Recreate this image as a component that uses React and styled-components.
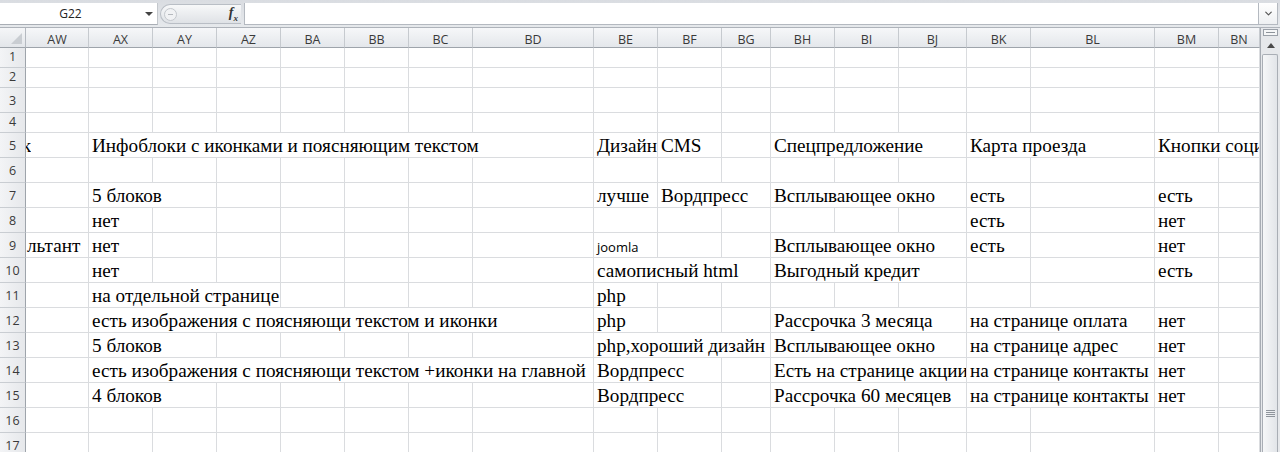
import React from "react";
import styled, { createGlobalStyle } from "styled-components";
import { ChevronDown } from "lucide-react";

const GlobalStyle = createGlobalStyle`
  html, body {
    margin: 0;
    padding: 0;
    overflow: hidden;
    background: #fff;
  }
  * { box-sizing: border-box; }
`;

const COLS = [
  ["AW", 63], ["AX", 64], ["AY", 64], ["AZ", 64], ["BA", 64], ["BB", 64],
  ["BC", 64], ["BD", 121], ["BE", 64], ["BF", 64], ["BG", 49], ["BH", 64],
  ["BI", 64], ["BJ", 68], ["BK", 64], ["BL", 124], ["BM", 64], ["BN", 41],
];
const TEMPLATE = `26px ${COLS.map((c) => c[1] + "px").join(" ")}`;

// c = column index (AW = 0), s = columns the text runs over,
// end = where text spilled from an off-screen column stops
const ROWS = [
  { n: 1, h: 20 },
  { n: 2, h: 20 },
  { n: 3, h: 25 },
  { n: 4, h: 20 },
  {
    n: 5, h: 25, cells: [
      { c: 0, t: "к", end: 5 },
      { c: 1, s: 7, t: "Инфоблоки с иконками и поясняющим текстом" },
      { c: 8, t: "Дизайн" },
      { c: 9, t: "CMS" },
      { c: 11, s: 3, t: "Спецпредложение" },
      { c: 14, s: 2, t: "Карта проезда" },
      { c: 16, s: 2, t: "Кнопки социальных сетей" },
    ],
  },
  { n: 6, h: 25 },
  {
    n: 7, h: 25, cells: [
      { c: 1, s: 2, t: "5 блоков" },
      { c: 8, t: "лучше" },
      { c: 9, s: 2, t: "Вордпресс" },
      { c: 11, s: 3, t: "Всплывающее окно" },
      { c: 14, t: "есть" },
      { c: 16, t: "есть" },
    ],
  },
  {
    n: 8, h: 25, cells: [
      { c: 1, t: "нет" },
      { c: 14, t: "есть" },
      { c: 16, t: "нет" },
    ],
  },
  {
    n: 9, h: 25, cells: [
      { c: 0, t: "льтант" },
      { c: 1, t: "нет" },
      { c: 8, t: "joomla", sans: true },
      { c: 11, s: 3, t: "Всплывающее окно" },
      { c: 14, t: "есть" },
      { c: 16, t: "нет" },
    ],
  },
  {
    n: 10, h: 25, cells: [
      { c: 1, t: "нет" },
      { c: 8, s: 3, t: "самописный html" },
      { c: 11, s: 3, t: "Выгодный кредит" },
      { c: 16, t: "есть" },
    ],
  },
  {
    n: 11, h: 25, cells: [
      { c: 1, s: 3, t: "на отдельной странице" },
      { c: 8, t: "php" },
    ],
  },
  {
    n: 12, h: 25, cells: [
      { c: 1, s: 7, t: "есть изображения с поясняющи текстом и иконки" },
      { c: 8, t: "php" },
      { c: 11, s: 3, t: "Рассрочка 3 месяца" },
      { c: 14, s: 2, t: "на странице оплата" },
      { c: 16, t: "нет" },
    ],
  },
  {
    n: 13, h: 25, cells: [
      { c: 1, s: 2, t: "5 блоков" },
      { c: 8, s: 3, t: "php,хороший дизайн" },
      { c: 11, s: 3, t: "Всплывающее окно" },
      { c: 14, s: 2, t: "на странице адрес" },
      { c: 16, t: "нет" },
    ],
  },
  {
    n: 14, h: 25, cells: [
      { c: 1, s: 7, t: "есть изображения с поясняющи текстом +иконки на главной" },
      { c: 8, s: 2, t: "Вордпресс" },
      { c: 11, s: 3, t: "Есть на странице акции" },
      { c: 14, s: 2, t: "на странице контакты" },
      { c: 16, t: "нет" },
    ],
  },
  {
    n: 15, h: 25, cells: [
      { c: 1, s: 2, t: "4 блоков" },
      { c: 8, s: 2, t: "Вордпресс" },
      { c: 11, s: 3, t: "Рассрочка 60 месяцев" },
      { c: 14, s: 2, t: "на странице контакты" },
      { c: 16, t: "нет" },
    ],
  },
  { n: 16, h: 25 },
  { n: 17, h: 25 },
];

const Window = styled.div`
  width: 1280px;
  height: 452px;
  display: flex;
  flex-direction: column;
  overflow: hidden;
  background: #e3e6ea;
`;

const FormulaBar = styled.div`
  flex: none;
  height: 27px;
  display: flex;
  align-items: flex-start;
  padding-top: 3px;
  background: linear-gradient(#d9dce1, #e6e9ec);
`;

const NameBox = styled.div`
  width: 158px;
  height: 22px;
  display: flex;
  align-items: center;
  background: #fff;
  border-bottom: 1px solid #a9aeb5;
  border-right: 1px solid #c3c7cc;
`;

const NameText = styled.span`
  flex: 1;
  text-align: center;
  padding-right: 4px;
  font: 12px "Open Sans", sans-serif;
  color: #222;
`;

const DropArrow = styled.span`
  width: 0;
  height: 0;
  margin-right: 4px;
  border-left: 4px solid transparent;
  border-right: 4px solid transparent;
  border-top: 4px solid #444;
`;

const FnArea = styled.div`
  width: 86px;
  height: 22px;
  display: flex;
  align-items: center;
  padding: 0 3px 0 2px;
`;

const Splitter = styled.div`
  flex: 1;
  height: 20px;
  display: flex;
  align-items: center;
  padding-left: 3px;
  border: 1px solid #b9bec5;
  border-right: none;
  border-radius: 10px 0 0 10px;
  background: linear-gradient(#f7f8f9, #dfe2e6);
`;

const Knob = styled.span`
  width: 13px;
  height: 13px;
  border-radius: 50%;
  border: 1px solid #c4c8cd;
  background: #f1f2f4;
  display: flex;
  align-items: center;
  justify-content: center;
  &::after {
    content: "";
    width: 5px;
    height: 1px;
    background: #b5b9be;
  }
`;

const Fx = styled.span`
  margin-left: auto;
  margin-right: 3px;
  font: italic bold 14px "Liberation Serif", serif;
  color: #333;
  sub {
    font-size: 9px;
  }
`;

const FormulaInput = styled.div`
  flex: 1;
  height: 22px;
  background: #fff;
  border: 1px solid #b4b9c0;
  border-top: none;
`;

const ExpandBtn = styled.div`
  width: 19px;
  height: 22px;
  margin-right: 2px;
  display: flex;
  align-items: center;
  justify-content: center;
  background: linear-gradient(#fff, #eef0f2);
  border: 1px solid #b4b9c0;
  border-left: none;
  border-top: none;
  color: #555;
`;

const Body = styled.div`
  flex: 1;
  min-height: 0;
  display: flex;
  border-top: 1px solid #aeb3ba;
`;

const Sheet = styled.div`
  width: 1260px;
  flex: none;
  overflow: hidden;
  background: #fff;
`;

const Row = styled.div`
  display: grid;
  grid-template-columns: ${TEMPLATE};
  height: ${(p) => p.$h}px;
`;

const Corner = styled.div`
  display: flex;
  align-items: flex-end;
  justify-content: flex-end;
  padding: 0 3px 3px 0;
  background: linear-gradient(#f5f6f8, #e3e6ea);
  border-right: 1px solid #b4b9c0;
  border-bottom: 1px solid #9ea4ab;
  &::after {
    content: "";
    width: 0;
    height: 0;
    border-left: 11px solid transparent;
    border-bottom: 11px solid #c9cdd2;
  }
`;

const ColHead = styled.div`
  display: flex;
  align-items: center;
  justify-content: center;
  padding-top: 4px;
  overflow: hidden;
  white-space: nowrap;
  background: linear-gradient(#f6f7f9, #e4e7eb);
  border-right: 1px solid #c6cacf;
  border-bottom: 1px solid #9ea4ab;
  font: 12.5px "Open Sans", sans-serif;
  color: #3a3a3a;
`;

const RowNum = styled.div`
  display: flex;
  align-items: flex-end;
  justify-content: center;
  padding-bottom: ${(p) => (p.$h > 20 ? 3 : 2)}px;
  background: linear-gradient(to right, #f3f4f6, #e6e8eb);
  border-right: 1px solid #9ea4ab;
  border-bottom: 1px solid #c9cdd2;
  font: 12.5px "Open Sans", sans-serif;
  color: #3a3a3a;
`;

const Cell = styled.div`
  grid-column: span ${(p) => p.$span};
  min-width: 0;
  display: flex;
  align-items: flex-end;
  padding: 0 2px 0 ${(p) => (p.$tight ? 1 : 3)}px;
  overflow: hidden;
  white-space: nowrap;
  border-right: 1px solid #dadcdf;
  border-bottom: 1px solid #dadcdf;
  font: ${(p) => (p.$sans ? '13px "Open Sans", sans-serif' : '19.2px "Liberation Serif", serif')};
  line-height: ${(p) => (p.$sans ? "20px" : "23px")};
  color: #000;
`;

const Spill = styled.span`
  flex: none;
  display: block;
  width: ${(p) => p.$end}px;
  margin-left: -1px;
  overflow: hidden;
  direction: rtl;
  white-space: nowrap;
  span {
    direction: ltr;
    unicode-bidi: embed;
  }
`;

const VScroll = styled.div`
  flex: none;
  width: 20px;
  display: flex;
  flex-direction: column;
  background: #e6e8eb;
  border-left: 1px solid #a7acb3;
`;

const SplitBox = styled.div`
  height: 7px;
  margin: 1px 2px 0;
  border: 1px solid #9aa0a8;
  background: #f5f6f7;
  display: flex;
  align-items: center;
  justify-content: center;
  &::after {
    content: "";
    width: 9px;
    height: 1px;
    background: #8d939a;
  }
`;

const ArrowBtn = styled.div`
  height: 18px;
  display: flex;
  align-items: center;
  justify-content: center;
  &::after {
    content: "";
    width: 0;
    height: 0;
    border-left: 4px solid transparent;
    border-right: 4px solid transparent;
    border-bottom: 5px solid #4a4a4a;
  }
`;

const Thumb = styled.div`
  flex: 1;
  margin: 0 2px 0 1px;
  display: flex;
  flex-direction: column;
  align-items: center;
  justify-content: flex-end;
  padding-bottom: 35px;
  gap: 1px;
  background: linear-gradient(to right, #f6f7f8, #e2e5e9);
  border: 1px solid #a9aeb5;
  border-bottom: none;
  border-radius: 2px 2px 0 0;
`;

const GripLine = styled.span`
  width: 9px;
  height: 1px;
  background: #8f959c;
`;

function SheetRow({ row }) {
  const byCol = {};
  (row.cells || []).forEach((c) => {
    byCol[c.c] = c;
  });
  const out = [];
  for (let i = 0; i < COLS.length; ) {
    const cell = byCol[i];
    const span = cell ? cell.s || 1 : 1;
    let content = null;
    if (cell && cell.end) {
      content = (
        <Spill $end={cell.end}>
          <span>{cell.t}</span>
        </Spill>
      );
    } else if (cell) {
      content = cell.t;
    }
    out.push(
      <Cell
        key={i}
        $span={span}
        $sans={cell && cell.sans}
        $tight={cell && i === 0}
      >
        {content}
      </Cell>
    );
    i += span;
  }
  return (
    <Row $h={row.h}>
      <RowNum $h={row.h}>{row.n}</RowNum>
      {out}
    </Row>
  );
}

export default function App() {
  return (
    <>
      <GlobalStyle />
      <Window>
        <FormulaBar>
          <NameBox>
            <NameText>G22</NameText>
            <DropArrow />
          </NameBox>
          <FnArea>
            <Splitter>
              <Knob />
              <Fx>
                f<sub>x</sub>
              </Fx>
            </Splitter>
          </FnArea>
          <FormulaInput />
          <ExpandBtn>
            <ChevronDown size={11} strokeWidth={2.5} />
          </ExpandBtn>
        </FormulaBar>
        <Body>
          <Sheet>
            <Row $h={20}>
              <Corner />
              {COLS.map(([name]) => (
                <ColHead key={name}>{name}</ColHead>
              ))}
            </Row>
            {ROWS.map((r) => (
              <SheetRow key={r.n} row={r} />
            ))}
          </Sheet>
          <VScroll>
            <SplitBox />
            <ArrowBtn />
            <Thumb>
              <GripLine />
              <GripLine />
              <GripLine />
              <GripLine />
            </Thumb>
          </VScroll>
        </Body>
      </Window>
    </>
  );
}
